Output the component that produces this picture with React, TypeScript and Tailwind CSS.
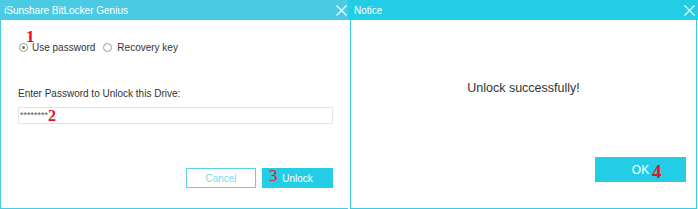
import React from 'react';

const CloseIcon: React.FC = () => (
  <svg width="11" height="11" viewBox="0 0 11 11" className="block">
    <path d="M0.5 0.5 L10.5 10.5 M10.5 0.5 L0.5 10.5" stroke="#ffffff" strokeWidth="1.1" fill="none" />
  </svg>
);

const Radio: React.FC<{ checked?: boolean }> = ({ checked = false }) => (
  <span className="w-[9px] h-[9px] rounded-full border border-[#9a9a9a] bg-white flex items-center justify-center shrink-0">
    {checked && <span className="w-[3px] h-[3px] rounded-full bg-[#3f9b1f]"></span>}
  </span>
);

const serif = { fontFamily: '"Liberation Serif", "Times New Roman", serif' };

const Mark: React.FC<{ children: React.ReactNode; className: string }> = ({ children, className }) => (
  <span className={`absolute leading-none text-[#e3141b] ${className}`} style={serif}>
    {children}
  </span>
);

export default function App() {
  return (
    <div
      className="relative flex w-[698px] h-[209px] bg-white text-[10px] text-[#333333]"
      style={{ fontFamily: '"Liberation Sans", Arial, sans-serif' }}
    >
      {/* unlock dialog */}
      <div className="w-[348px] flex flex-col">
        <div className="h-[20px] bg-[#4bcae4] flex items-center justify-between pl-[4px] pr-[1px] text-white">
          <span>iSunshare BitLocker Genius</span>
          <CloseIcon />
        </div>
        <div className="flex-1 flex flex-col border-l border-b border-[#45cbe6] pl-[17px] pr-[15px]">
          <div className="mt-[21px] h-[12px] flex items-center">
            <span className="ml-[1px]"><Radio checked /></span>
            <span className="ml-[4px]">Use password</span>
            <span className="ml-[8px]"><Radio /></span>
            <span className="ml-[5px]">Recovery key</span>
          </div>
          <div className="mt-[35px] leading-[12px]">Enter Password to Unlock this Drive:</div>
          <div className="mt-[7px] h-[17px] border border-[#e4e4e4] flex items-center pl-[1px] text-[#555555] text-[9px]">
            <span>********</span>
            <span className="text-[16px] leading-none font-bold text-[#e3141b]" style={serif}>2</span>
          </div>
          <div className="mt-[44px] flex justify-end gap-[6px]">
            <button className="w-[70px] h-[20px] border border-[#5fd2ea] bg-white text-[#7fd8ec] text-[10px]">
              Cancel
            </button>
            <button className="w-[71px] h-[20px] bg-[#22cde5] text-white text-[10px]">
              Unlock
            </button>
          </div>
        </div>
      </div>

      {/* notice dialog */}
      <div className="flex-1 flex flex-col">
        <div className="h-[20px] bg-[#22cde5] flex items-center justify-between pl-[6px] pr-[3px] text-white">
          <span>Notice</span>
          <CloseIcon />
        </div>
        <div className="flex-1 flex flex-col ml-[2px] mr-[1px] border-l border-r border-b border-[#3ccbe6]">
          <div className="mt-[61px] text-center text-[12.5px] leading-[15px] text-[#333333]">
            Unlock successfully!
          </div>
          <div className="mt-[61px] flex justify-end pr-[10px]">
            <button className="w-[91px] h-[25px] bg-[#22cde5] text-white text-[12px]">OK</button>
          </div>
        </div>
      </div>

      {/* step annotations */}
      <Mark className="left-[26px] top-[28px] text-[17px] font-bold">1</Mark>
      <Mark className="left-[269px] top-[167px] text-[17px]">3</Mark>
      <Mark className="left-[652px] top-[162px] text-[19px] font-bold">4</Mark>
    </div>
  );
}
